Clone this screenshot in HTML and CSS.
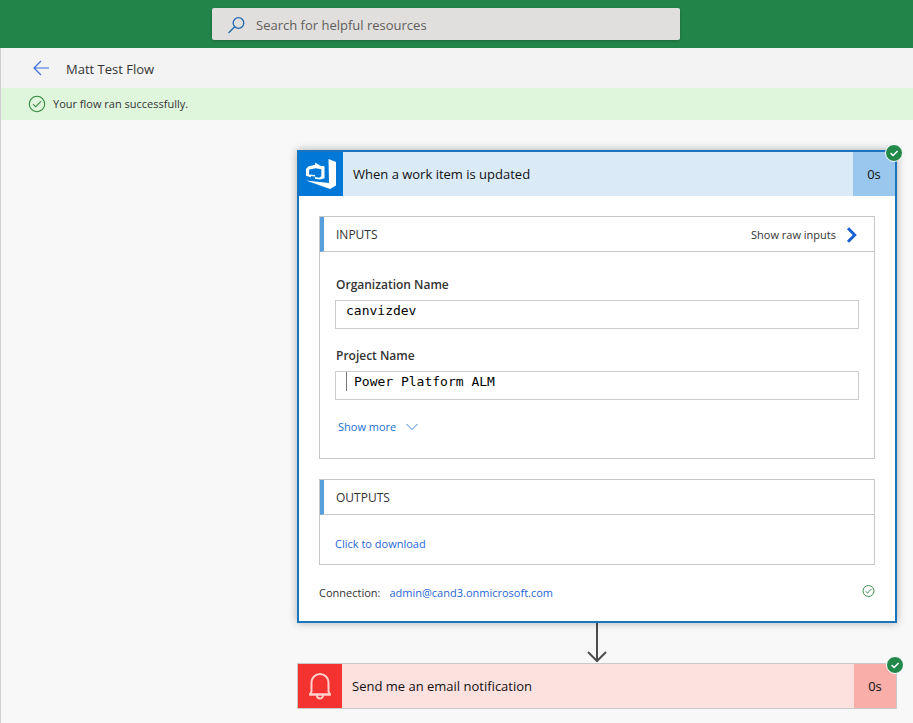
FILE: index.html
```
<!DOCTYPE html>
<html lang="en">

<head>
    <meta charset="UTF-8">
    <meta name="viewport" content="width=device-width, initial-scale=1.0">
    <title>Matt Test Flow</title>
    <link rel="stylesheet" href="styles.css">
</head>

<body>
    <header class="top-bar">
        <label class="search">
            <svg width="18" height="18" viewBox="0 0 18 18" fill="none" stroke="#2266b0" stroke-width="1.3">
                <circle cx="10.5" cy="7" r="5.3" />
                <path d="M6.7 10.8L.5 17" />
            </svg>
            <input type="text" placeholder="Search for helpful resources" aria-label="Search">
        </label>
    </header>

    <main class="page">
        <div class="title-bar">
            <a href="#" class="back" aria-label="Back">
                <svg width="16" height="16" viewBox="0 0 16 16" fill="none" stroke="#3b6fe0" stroke-width="1.2">
                    <path d="M16 8H1M8 1L1 8l7 7" />
                </svg>
            </a>
            <h1>Matt Test Flow</h1>
        </div>

        <div class="banner" role="status">
            <svg width="18" height="18" viewBox="0 0 18 18" fill="none" stroke="#2f8a3c" stroke-width="1.1">
                <circle cx="9" cy="9" r="7.7" />
                <path d="M5 9.2l2.7 2.6 5.2-5.4" />
            </svg>
            <span>Your flow ran successfully.</span>
        </div>

        <div class="canvas">
            <section class="card trigger">
                <div class="card-header">
                    <div class="card-icon">
                        <svg width="44" height="44" viewBox="0 0 44 44" fill="#fff">
                            <path d="M29.5 7l7.5 3v23.5l-6 3.5L7 28.5l23 2.5z" />
                            <path fill-rule="evenodd" d="M7 17l2.2-2.6 7-1.6v-2.3l5 3.2 4.3.5v12l-4.5 1.3-5-.8-.2-2.3-3.6-.3-.5 1.2L7 23.8zM10.2 17.5l-.2 5 6 .4.2 2.2 3.8.6 2.3-1.5v-7l-5.6-1z" />
                        </svg>
                    </div>
                    <h2>When a work item is updated</h2>
                    <span class="duration">0s</span>
                </div>

                <div class="card-body">
                    <div class="panel">
                        <div class="panel-header">
                            <h3>INPUTS</h3>
                            <button type="button" class="raw-btn">
                                Show raw inputs
                                <svg width="12" height="16" viewBox="0 0 12 16" fill="none" stroke="#1a5fd0" stroke-width="3">
                                    <path d="M2 1.2L8.7 8 2 14.8" />
                                </svg>
                            </button>
                        </div>
                        <div class="fields">
                            <label for="org-name">Organization Name</label>
                            <div class="field">
                                <input type="text" id="org-name" value="canvizdev" readonly>
                            </div>
                            <label for="project-name">Project Name</label>
                            <div class="field">
                                <input type="text" id="project-name" class="token" value="Power Platform ALM" readonly>
                            </div>
                            <button type="button" class="more-btn">
                                Show more
                                <svg width="12" height="8" viewBox="0 0 12 8" fill="none" stroke="#3f86d2">
                                    <path d="M.5 1L6 6.5 11.5 1" />
                                </svg>
                            </button>
                        </div>
                    </div>

                    <div class="panel">
                        <div class="panel-header">
                            <h3>OUTPUTS</h3>
                        </div>
                        <div class="outputs">
                            <a href="#">Click to download</a>
                        </div>
                    </div>

                    <div class="connection">
                        <span>Connection:</span>
                        <a href="#">admin@cand3.onmicrosoft.com</a>
                        <svg width="14" height="14" viewBox="0 0 14 14" fill="none" stroke="#3f8f52">
                            <circle cx="7.5" cy="6" r="5.5" />
                            <path d="M4.5 6.2l2 1.9 4-4.2" />
                        </svg>
                    </div>
                </div>

                <svg class="badge" width="18" height="18" viewBox="0 0 18 18" fill="none">
                    <circle cx="9" cy="9" r="8.5" fill="#23894a" stroke="#fff" />
                    <path d="M5.6 9.2l2.5 2.3L12.6 7" stroke="#fff" stroke-width="1.6" />
                </svg>
            </section>

            <svg class="arrow" width="20" height="40" viewBox="0 0 20 40" fill="none" stroke="#4d4d4d" stroke-width="2">
                <path d="M10 0v38M1 29l9 9 9-9" />
            </svg>

            <section class="card action">
                <div class="card-header">
                    <div class="card-icon">
                        <svg width="44" height="44" viewBox="0 0 44 44" fill="none" stroke="#ffd0cc" stroke-width="2">
                            <path d="M13.5 27.5V18.5a8.5 8.5 0 0 1 17 0v9l1.5 3H12z" stroke-linejoin="round" />
                            <path d="M11 30.5h22M19 31.5a3 3 0 0 0 6 0" />
                        </svg>
                    </div>
                    <h2>Send me an email notification</h2>
                    <span class="duration">0s</span>
                </div>
                <svg class="badge" width="18" height="18" viewBox="0 0 18 18" fill="none">
                    <circle cx="9" cy="9" r="8.5" fill="#23894a" stroke="#fff" />
                    <path d="M5.6 9.2l2.5 2.3L12.6 7" stroke="#fff" stroke-width="1.6" />
                </svg>
            </section>
        </div>
    </main>
</body>

</html>
```

FILE: styles.css
```
* {
    box-sizing: border-box;
}

body {
    margin: 0;
    min-height: 100vh;
    display: flex;
    flex-direction: column;
    font-family: "Open Sans", "Noto Sans", sans-serif;
    font-size: 11px;
    line-height: 16px;
    color: #333;
    background-color: #f8f8f8;
}

h1,
h2,
h3 {
    margin: 0;
    font-weight: normal;
}

svg {
    display: block;
    flex-shrink: 0;
}

a {
    color: #1f66d6;
    text-decoration: none;
}

button {
    padding: 0;
    border: none;
    background: none;
    font: inherit;
    display: flex;
    align-items: center;
    cursor: pointer;
}

/* Green bar with the search box */
.top-bar {
    display: flex;
    justify-content: center;
    padding: 8px 21px 8px 0;
    background-color: #238449;
}

.search {
    display: flex;
    align-items: center;
    gap: 10px;
    width: 468px;
    height: 32px;
    padding: 2px 16px 0;
    border-radius: 2px;
    background-color: #e1dfdd;
    box-shadow: 0 1px 3px rgba(0, 0, 0, 0.2);
}

.search input {
    flex: 1;
    padding: 0;
    border: none;
    outline: none;
    background: none;
    font: inherit;
    font-size: 13px;
}

.search input::placeholder {
    color: #605e5c;
    opacity: 1;
}

.page {
    flex: 1;
    border-left: 1px solid #d0d0d0;
}

.title-bar {
    display: flex;
    align-items: center;
    gap: 17px;
    height: 40px;
    padding: 0 32px;
    background-color: #f3f3f3;
}

.title-bar h1 {
    padding-top: 2px;
    font-size: 13px;
    line-height: 20px;
}

.banner {
    display: flex;
    align-items: center;
    gap: 7px;
    height: 32px;
    padding: 0 27px;
    background-color: #dff6dd;
}

.canvas {
    display: flex;
    flex-direction: column;
    align-items: center;
    width: 600px;
    margin-left: auto;
    margin-right: 16px;
    padding: 30px 0 14px;
}

/* Flow steps */
.card {
    position: relative;
    width: 100%;
    background-color: #fff;
}

.trigger {
    border: 2px solid #1a73bd;
    box-shadow: 0 0 8px rgba(0, 0, 0, 0.3);
}

.action {
    border: 1px solid #c8c8c8;
}

.card-header {
    display: flex;
    align-items: center;
    height: 44px;
    color: #111;
}

.card-header h2 {
    flex: 1;
    padding-left: 10px;
    font-size: 13px;
    line-height: 20px;
}

.card-icon {
    width: 44px;
    height: 44px;
}

.duration {
    width: 42px;
    font-size: 13px;
    line-height: 44px;
    text-align: center;
}

.trigger .card-header {
    background-color: #daeaf7;
}

.trigger .card-icon {
    background-color: #0078d7;
}

.trigger .duration {
    background-color: #9ac7ed;
}

.action .card-header {
    background-color: #fde1de;
}

.action .card-icon {
    background-color: #f43331;
}

.action .duration {
    background-color: #f9aeaa;
}

.badge {
    position: absolute;
    top: -8px;
    right: -8px;
}

.card-body {
    padding: 20px;
}

.panel {
    margin-bottom: 20px;
    border: 1px solid #c8c8c8;
}

.panel-header {
    display: flex;
    align-items: center;
    justify-content: space-between;
    height: 35px;
    padding: 2px 16px 0 12px;
    border-left: 4px solid #569fdc;
    border-bottom: 1px solid #c8c8c8;
}

.panel-header h3 {
    font-size: 12px;
}

.raw-btn {
    gap: 10px;
    color: #333;
}

.fields {
    display: flex;
    flex-direction: column;
    padding: 25px 15px 23px;
}

.fields label {
    margin-bottom: 7px;
    padding-left: 1px;
    font-size: 12px;
    font-weight: 600;
}

.field {
    height: 29px;
    margin-bottom: 19px;
    padding-left: 10px;
    border: 1px solid #ccc;
}

.field input {
    display: block;
    width: 100%;
    height: 19px;
    padding: 0;
    border: none;
    outline: none;
    font-family: "DejaVu Sans Mono", monospace;
    font-size: 13px;
    color: #000;
}

.field .token {
    padding-left: 7px;
    border-left: 1px solid #777;
}

.more-btn {
    align-self: flex-start;
    gap: 10px;
    padding-left: 3px;
    color: #1a6fd0;
}

.outputs {
    padding: 21px 15px 12px;
}

.connection {
    display: flex;
    align-items: center;
    gap: 9px;
}

.connection svg {
    align-self: flex-start;
    margin-left: auto;
}
```
